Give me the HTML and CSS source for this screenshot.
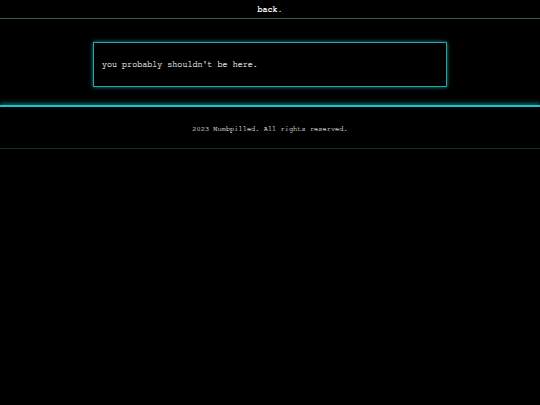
FILE: index.html
```html
<!DOCTYPE html>
<html>
<head>
<meta charset="utf-8">
<link rel="stylesheet" href="styles.css">
</head>
<body>
<header class="topbar"><a class="back" href="#">back.</a></header>
<main class="content">
  <div class="notice">you probably shouldn't be here.</div>
</main>
<footer class="footer">2023 Numbpilled. All rights reserved.</footer>
</body>
</html>
```
FILE: styles.css
```css
html, body {
  margin: 0;
  padding: 0;
  background: #000;
  font-family: "Nimbus Mono PS", "Nimbus Mono L", "FreeMono", "Courier", "Liberation Mono", monospace;
  color: #e0e0e0;
}
.topbar {
  height: 19px;
  border-bottom: 1px solid #2a5f60;
  display: flex;
  justify-content: center;
  align-items: center;
  padding-top: 1px;
  box-sizing: border-box;
}
.back {
  color: #f0f0f0;
  font-weight: bold;
  font-size: 8.4px;
  text-decoration: none;
}
.content {
  padding: 23px 0 18px;
  display: flex;
  justify-content: center;
}
.notice {
  width: 336px;
  height: 43px;
  padding: 0 8px;
  border: 1px solid #2aa5a5;
  box-shadow: 0 0 4px #1f8f8f;
  display: flex;
  align-items: center;
  font-size: 8.4px;
  color: #e2e2e2;
  -webkit-text-stroke: 0.15px #e2e2e2;
}
.footer {
  border-top: 2px solid #1fc4c8;
  box-shadow: 0 -2px 4px rgba(31, 196, 200, 0.5);
  border-bottom: 1px solid #0c2e2e;
  height: 44px;
  padding-top: 1px;
  box-sizing: border-box;
  display: flex;
  justify-content: center;
  align-items: center;
  font-size: 7px;
  color: #d0d0d0;
  -webkit-text-stroke: 0.15px #d0d0d0;
}
```
